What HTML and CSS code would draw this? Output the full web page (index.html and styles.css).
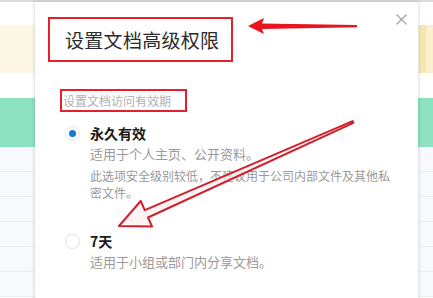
FILE: index.html
```html
<!DOCTYPE html>
<html lang="zh">
<head>
<meta charset="utf-8">
<title>设置文档高级权限</title>
<link rel="stylesheet" href="styles.css">
</head>
<body>
<div class="page">
  <div class="topline"></div>
  <div class="row row-blank r23"></div>
  <div class="row row-yellow"><div class="y-left"></div><div class="y-right"></div></div>
  <div class="row row-blank r25"></div>
  <div class="row row-green"></div>
  <div class="row row-grey"></div>
  <div class="row row-grey"></div>
  <div class="row row-grey"></div>
  <div class="row row-grey"></div>
  <div class="row row-grey"></div>
  <div class="row row-grey"></div>
</div>

<div class="modal">
  <button class="close" aria-label="关闭">
    <svg width="11" height="11" viewBox="0 0 11 11"><path d="M0.5 0.5 L10.5 10.5 M10.5 0.5 L0.5 10.5" stroke="#a3a3a3" stroke-width="1.2" fill="none"/></svg>
  </button>
  <div class="title-box"><h1 class="title">设置文档高级权限</h1></div>
  <div class="sub-box">设置文档访问有效期</div>

  <div class="option">
    <div class="opt-head">
      <span class="radio radio-on"><span class="dot"></span></span>
      <span class="opt-label">永久有效</span>
    </div>
    <p class="desc">适用于个人主页、公开资料。</p>
    <p class="warn">此选项安全级别较低，不建议用于公司内部文件及其他私密文件。</p>
  </div>

  <div class="option option-2">
    <div class="opt-head">
      <span class="radio"></span>
      <span class="opt-label">7天</span>
    </div>
    <p class="desc">适用于小组或部门内分享文档。</p>
  </div>
</div>

<svg class="annot" width="433" height="298" viewBox="0 0 433 298">
  <polygon points="248,26 264,18 262,23.5 357,25 357,27.2 262,29 264,34" fill="#e8131c"/>
  <polygon points="119,226 152.1,226.6 148,217.5 353.4,122.9 352.6,121.1 144.8,210.1 140.7,201" fill="rgba(255,240,242,0.75)" stroke="#d0202e" stroke-width="2" stroke-linejoin="round"/>
</svg>
</body>
</html>
```

FILE: styles.css
```css
* { box-sizing: border-box; }
html, body { margin: 0; padding: 0; }
body {
  width: 433px;
  height: 298px;
  overflow: hidden;
  background: #ffffff;
  font-family: "Noto Sans CJK SC", "Noto Sans", sans-serif;
  position: relative;
}
.page { display: flex; flex-direction: column; }
.topline { height: 2px; background: #dcdcdc; }
.row { width: 100%; }
.r23 { height: 23px; background: #ffffff; }
.r25 { height: 25px; background: #ffffff; }
.row-yellow { height: 48px; display: flex; }
.y-left { flex: 1; background: #fdf7e6; }
.y-right { width: 14px; background: linear-gradient(to right, #f6e7b0 0 7px, #faf0cc 7px); }
.row-green { height: 49px; background: #8ce2c1; }
.row-grey { height: 25px; background: #f7f9fc; border-bottom: 1px solid #eaeef4; }

.modal {
  position: absolute;
  left: 35px;
  top: 2px;
  width: 383px;
  height: 310px;
  background: #ffffff;
  box-shadow: 0 0 3px 1px rgba(0, 0, 0, 0.13);
  padding: 15px 0 0 13px;
}
.close {
  position: absolute;
  right: 10px;
  top: 11px;
  width: 13px;
  height: 13px;
  padding: 1px;
  border: 0;
  background: transparent;
  display: flex;
  align-items: center;
  justify-content: center;
}
.title-box {
  width: 185px;
  height: 45px;
  border: 2px solid #e3202b;
  display: flex;
  align-items: center;
  padding-left: 15px;
}
.title {
  margin: 0;
  font-size: 19px;
  font-weight: 400;
  color: #2b2b2b;
  line-height: 22px;
  letter-spacing: 0.3px;
}
.sub-box {
  margin: 27px 0 0 12px;
  width: 127px;
  height: 23px;
  border: 2px solid #e3202b;
  padding-left: 1px;
  font-size: 12px;
  line-height: 19px;
  color: #b0b0b0;
}
.option { margin: 11px 0 0 17px; }
.option-2 { margin-top: 30px; }
.opt-head {
  display: flex;
  align-items: center;
  height: 20px;
}
.radio {
  width: 15px;
  height: 15px;
  border-radius: 50%;
  border: 1px solid #e2e2e2;
  background: #fff;
  display: flex;
  align-items: center;
  justify-content: center;
  margin-right: 10px;
  box-shadow: 0 0 1px rgba(0,0,0,0.05);
}
.radio-on { border-color: #e6ebf0; }
.dot {
  width: 7px;
  height: 7px;
  border-radius: 50%;
  background: #1677d9;
}
.opt-label {
  font-size: 14px;
  font-weight: 700;
  color: #1a1a1a;
  line-height: 20px;
}
.desc {
  margin: 2px 0 0 25px;
  font-size: 13px;
  line-height: 18px;
  color: #9a9a9a;
}
.warn {
  margin: 4px 0 0 25px;
  width: 300px;
  font-size: 12px;
  line-height: 17px;
  color: #999999;
}
.annot {
  position: absolute;
  left: 0;
  top: 0;
  pointer-events: none;
}
```
